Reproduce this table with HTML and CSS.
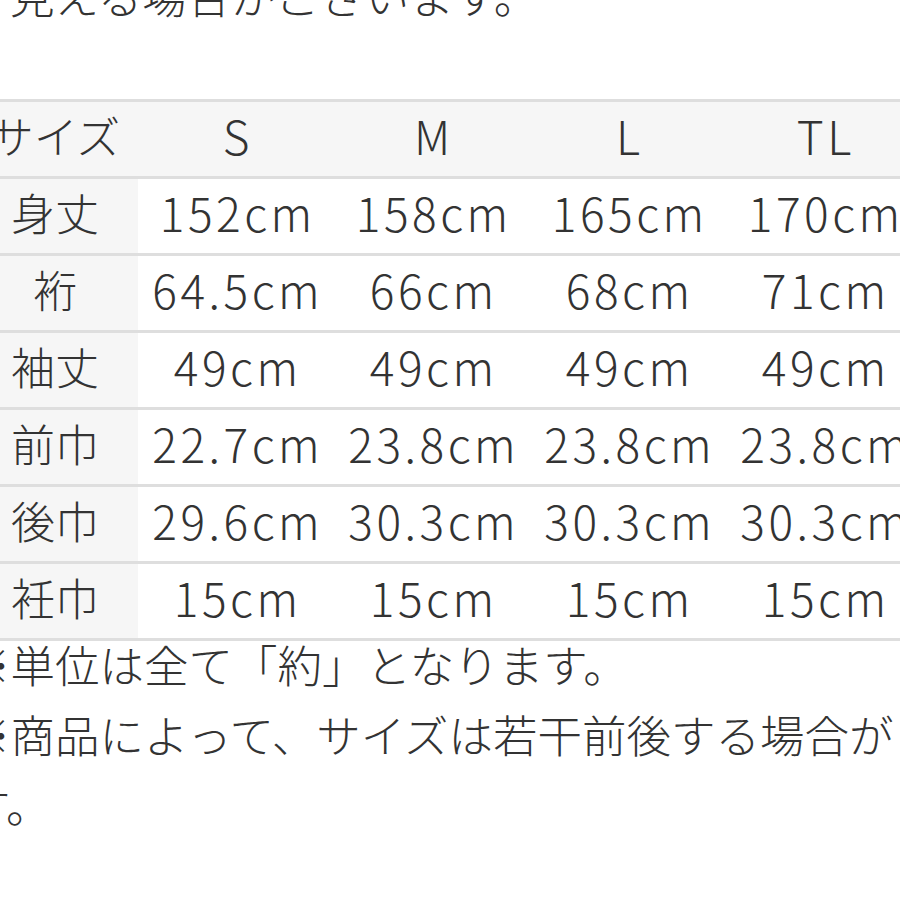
FILE: index.html
```html
<!DOCTYPE html>
<html lang="ja">
<head>
<meta charset="utf-8">
<link rel="stylesheet" href="styles.css">
</head>
<body>
<div class="page">
  <p class="lead">見える場合がございます。</p>
  <table class="size">
    <tr class="head">
      <th class="label">サイズ</th><th>S</th><th>M</th><th>L</th><th>TL</th>
    </tr>
    <tr><th class="label">身丈</th><td>152cm</td><td>158cm</td><td>165cm</td><td>170cm</td></tr>
    <tr><th class="label">裄</th><td>64.5cm</td><td>66cm</td><td>68cm</td><td>71cm</td></tr>
    <tr><th class="label">袖丈</th><td>49cm</td><td>49cm</td><td>49cm</td><td>49cm</td></tr>
    <tr><th class="label">前巾</th><td>22.7cm</td><td>23.8cm</td><td>23.8cm</td><td>23.8cm</td></tr>
    <tr><th class="label">後巾</th><td>29.6cm</td><td>30.3cm</td><td>30.3cm</td><td>30.3cm</td></tr>
    <tr><th class="label">衽巾</th><td>15cm</td><td>15cm</td><td>15cm</td><td>15cm</td></tr>
  </table>
  <div class="notes">
    <p>※単位は全て「約」となります。</p>
    <p>※商品によって、サイズは若干前後する場合がございます。</p>
  </div>
</div>
</body>
</html>
```
FILE: styles.css
```css
html, body {
  margin: 0;
  padding: 0;
  background: #ffffff;
  overflow: hidden;
  width: 900px;
  height: 900px;
}
body {
  font-family: "Noto Sans CJK JP", "Noto Sans", sans-serif;
  font-weight: 300;
  color: #333333;
}
.page {
  width: 900px;
  height: 900px;
  overflow: hidden;
  position: relative;
}
.lead {
  margin: -40px 0 0 10px;
  font-size: 44.5px;
  line-height: 70px;
  height: 70px;
  white-space: nowrap;
}
.size {
  margin-top: 69px;
  margin-left: -28px;
  border-collapse: collapse;
  table-layout: fixed;
  width: 950px;
}
.size tr {
  height: 77px;
}
.size th, .size td {
  border-top: 3px solid #dedede;
  border-bottom: 3px solid #dedede;
  padding: 0 0 8px 3.5px;
  text-align: center;
  vertical-align: middle;
  font-weight: 300;
  font-size: 46px;
  letter-spacing: 3.5px;
  width: 192.5px;
  white-space: nowrap;
  overflow: hidden;
}
.size .label {
  width: 166px;
  background: #f6f6f6;
  font-size: 44px;
  letter-spacing: 0;
  padding-left: 0;
}
.size .head th {
  background: #f6f6f6;
}
.size td {
  background: #ffffff;
}
.notes {
  margin-top: -12px;
  margin-left: -34px;
  width: 1120px;
  font-size: 44.5px;
  line-height: 70px;
}
.notes p {
  margin: 0;
}
```
